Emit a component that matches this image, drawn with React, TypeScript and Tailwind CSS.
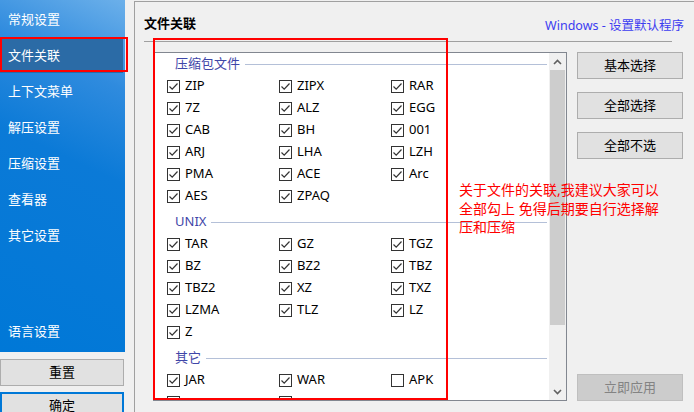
import React from "react";

const font = { fontFamily: '"Noto Sans", "Noto Sans CJK SC", sans-serif' };

const navItems = ["常规设置", "文件关联", "上下文菜单", "解压设置", "压缩设置", "查看器", "其它设置"];

// sections of the file-type list
const sections: { title: string; items: [string, boolean][] }[] = [
  {
    title: "压缩包文件",
    items: [
      ["ZIP", true], ["ZIPX", true], ["RAR", true],
      ["7Z", true], ["ALZ", true], ["EGG", true],
      ["CAB", true], ["BH", true], ["001", true],
      ["ARJ", true], ["LHA", true], ["LZH", true],
      ["PMA", true], ["ACE", true], ["Arc", true],
      ["AES", true], ["ZPAQ", true],
    ],
  },
  {
    title: "UNIX",
    items: [
      ["TAR", true], ["GZ", true], ["TGZ", true],
      ["BZ", true], ["BZ2", true], ["TBZ", true],
      ["TBZ2", true], ["XZ", true], ["TXZ", true],
      ["LZMA", true], ["TLZ", true], ["LZ", true],
      ["Z", true],
    ],
  },
  {
    title: "其它",
    items: [
      ["JAR", true], ["WAR", true], ["APK", false],
      // next row is scrolled out of view, only the boxes peek in
      ["", true], ["", true],
    ],
  },
];

const CheckBox = ({ checked }: { checked: boolean }) => (
  <div className="w-[13px] h-[13px] border border-[#333333] bg-white flex items-center justify-center shrink-0">
    {checked && (
      <svg width="11" height="11" viewBox="0 0 11 11">
        <path d="M1.5 5.5 L4.2 8.2 L9.5 2.5" fill="none" stroke="#333333" strokeWidth="1.2" />
      </svg>
    )}
  </div>
);

const Button = ({ label, disabled }: { label: string; disabled?: boolean }) => (
  <div
    className={
      disabled
        ? "h-[27px] w-[106px] flex items-center justify-center border border-[#bfbfbf] bg-[#cccccc] text-[13px] text-[#838383]"
        : "h-[27px] w-[106px] flex items-center justify-center border border-[#adadad] bg-[#e1e1e1] text-[13px] text-black"
    }
  >
    {label}
  </div>
);

export default function App() {
  return (
    <div className="relative w-[694px] h-[412px] bg-[#f0f0f0] flex overflow-hidden" style={font}>
      {/* Left column */}
      <div className="w-[125px] shrink-0 flex flex-col">
        <div className="h-[352px] shrink-0 flex flex-col pt-[2px] pb-[2px] bg-[linear-gradient(205deg,#6cb0ea_0%,#2f8bde_22%,#0b7ad7_45%,#0078d7_100%)]">
          {navItems.map((t) =>
            t === "文件关联" ? (
              <div key={t} className="h-[36px] py-[1px]">
                <div className="h-[34px] w-[123px] bg-[#2b6ba6] flex items-center pl-[8px] text-[13px] text-white">
                  {t}
                </div>
              </div>
            ) : (
              <div key={t} className="h-[36px] flex items-center pl-[8px] text-[13px] text-white">
                {t}
              </div>
            )
          )}
          <div className="mt-auto h-[36px] flex items-center pl-[8px] text-[13px] text-white">语言设置</div>
        </div>
        <div className="mt-[7px] shrink-0 h-[27px] w-[124px] flex items-center justify-center border border-[#adadad] bg-[#e1e1e1] text-[13px]">
          重置
        </div>
        <div className="mt-[6px] shrink-0 h-[28px] w-[124px] flex items-center justify-center border-2 border-[#0078d7] bg-[#e1e1e1] text-[13px]">
          确定
        </div>
      </div>

      {/* Right panel */}
      <div className="ml-[9px] mt-[1px] flex-1 flex flex-col border-l border-t border-[#a0a0a0]">
        <div className="h-[39px] flex justify-between pl-[9px] pr-[10px]">
          <div className="pt-[12px] text-[13px] font-bold text-black">文件关联</div>
          <div className="pt-[15px] text-[12.5px] text-[#3c3cf0]">Windows - 设置默认程序</div>
        </div>
        <div className="ml-[9px] w-[528px] h-px bg-[#a0a0a0]" />

        <div className="flex mt-[10px] ml-[18px]">
          {/* List box */}
          <div className="w-[414px] h-[349px] border border-[#828790] bg-white flex overflow-hidden">
            <div className="flex-1 flex flex-col">
              {sections.map((s, si) => (
                <div key={s.title} className={si === 0 ? "shrink-0" : "shrink-0 mt-[4px]"}>
                  <div className="h-[22px] flex items-center pl-[21px] pr-[2px]">
                    <span className="text-[13px] text-[#3f46a8] leading-none -mt-[1px]">{s.title}</span>
                    <div className="flex-1 ml-[5px] h-px bg-[#b4c0d8]" />
                  </div>
                  <div className="grid grid-cols-[112px_112px_112px] pl-[13px]">
                    {s.items.map(([name, checked], i) => (
                      <div key={s.title + i} className="h-[22px] flex items-center gap-[5px]">
                        <CheckBox checked={checked} />
                        {name && <span className="text-[13px] text-black">{name}</span>}
                      </div>
                    ))}
                  </div>
                </div>
              ))}
            </div>
            {/* Scrollbar */}
            <div className="w-[17px] shrink-0 bg-[#f0f0f0] flex flex-col">
              <div className="h-[17px] flex items-center justify-center">
                <svg width="9" height="6" viewBox="0 0 9 6">
                  <path d="M1 5 L4.5 1.5 L8 5" fill="none" stroke="#606060" strokeWidth="1.6" />
                </svg>
              </div>
              <div className="h-[255px] mx-[1px] bg-[#cdcdcd]" />
              <div className="flex-1" />
              <div className="h-[17px] flex items-center justify-center">
                <svg width="9" height="6" viewBox="0 0 9 6">
                  <path d="M1 1 L4.5 4.5 L8 1" fill="none" stroke="#606060" strokeWidth="1.6" />
                </svg>
              </div>
            </div>
          </div>

          {/* Buttons */}
          <div className="ml-[10px] h-[349px] flex flex-col gap-[13px]">
            <Button label="基本选择" />
            <Button label="全部选择" />
            <Button label="全部不选" />
            <div className="mt-auto">
              <Button label="立即应用" disabled />
            </div>
          </div>
        </div>
      </div>

      {/* Annotations */}
      <div className="absolute left-0 top-[37px] w-[128px] h-[35px] border-2 border-[#ff0000]" />
      <div className="absolute left-[153px] top-[38px] w-[295px] h-[362px] border-2 border-[#ff0000]" />
      <div className="absolute left-[459px] top-[181px] w-[215px] text-[14px] leading-[18.5px] text-[#ff0000]">
        关于文件的关联,我建议大家可以
        <br />
        全部勾上 免得后期要自行选择解
        <br />
        压和压缩
      </div>
    </div>
  );
}
